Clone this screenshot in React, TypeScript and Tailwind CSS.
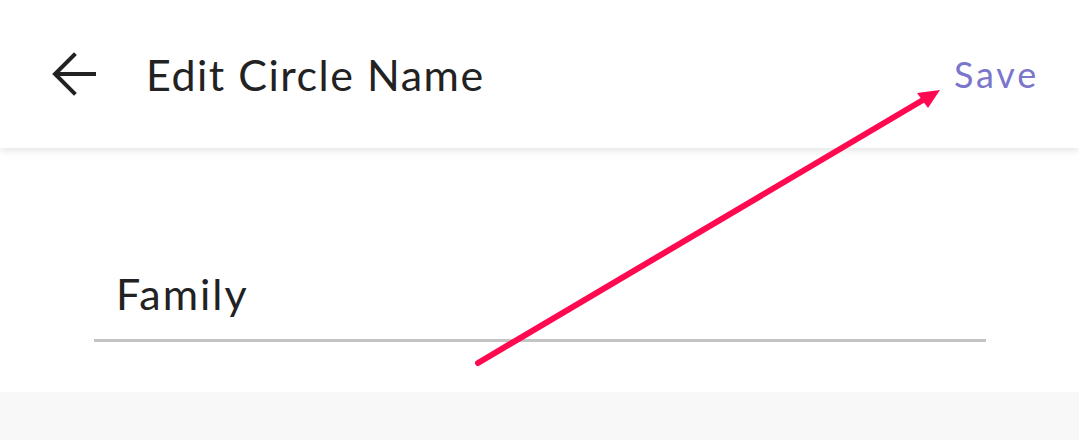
export default function App() {
  return (
    <div className="relative w-[1079px] h-[440px] overflow-hidden bg-[#f8f8f8] font-['Lato',sans-serif]">
      {/* Header */}
      <header className="relative z-10 flex h-[148px] items-center bg-white pl-[52px] pr-[40px] shadow-[0_2px_8px_rgba(0,0,0,0.12)]">
        <svg width="44" height="44" viewBox="0 0 44 44" className="shrink-0">
          <path d="M42 22H4M22 3L3 22l19 19" fill="none" stroke="#222" strokeWidth="4" strokeLinecap="square" />
        </svg>
        <h1 className="ml-[50px] text-[43px] leading-none tracking-[1.5px] text-[#222]">Edit Circle Name</h1>
        <button className="ml-auto text-[36px] leading-none tracking-[2.8px] text-[#7b76cc]">Save</button>
      </header>

      {/* Body */}
      <main className="h-[244px] bg-white px-[94px] pr-[93px] pt-[124px]">
        <div className="border-b-[3px] border-[#c4c4c4] pb-[24px] pl-[22px] text-[43px] leading-none tracking-[2px] text-[#222]">
          Family
        </div>
      </main>

      {/* Annotation arrow */}
      <svg className="absolute inset-0 z-20 pointer-events-none" width="1079" height="440">
        <line x1="478" y1="363" x2="928" y2="97" stroke="#ff0a50" strokeWidth="6" strokeLinecap="round" />
        <polygon points="940,90 917,93 928,108" fill="#ff0a50" />
      </svg>
    </div>
  );
}
